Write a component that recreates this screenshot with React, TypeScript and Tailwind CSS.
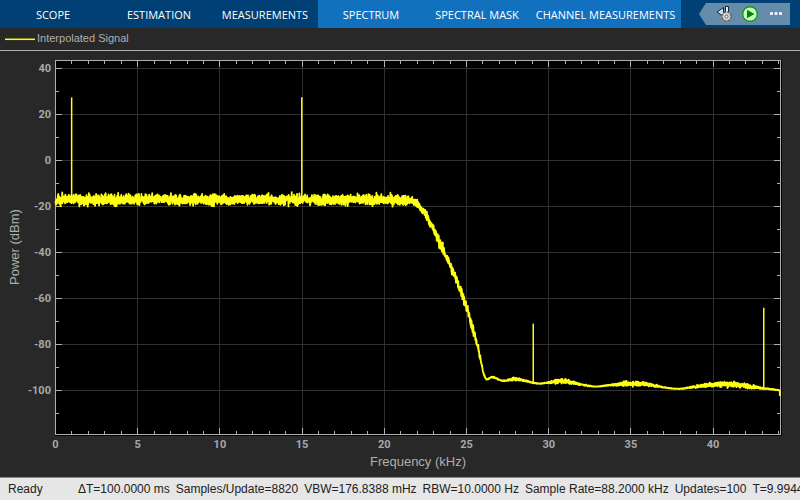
import React, { useState } from "react";

type Tab = { label: string; contextual?: boolean; wide?: boolean };

const tabs: Tab[] = [
  { label: "SCOPE" },
  { label: "ESTIMATION" },
  { label: "MEASUREMENTS" },
  { label: "SPECTRUM", contextual: true },
  { label: "SPECTRAL MASK", contextual: true },
  { label: "CHANNEL MEASUREMENTS", contextual: true, wide: true },
];

const stats = [
  "ΔT=100.0000 ms",
  "Samples/Update=8820",
  "VBW=176.8388 mHz",
  "RBW=10.0000 Hz",
  "Sample Rate=88.2000 kHz",
  "Updates=100",
  "T=9.9944",
];

// plot area inside the svg
const LEFT = 55;
const RIGHT = 780;
const TOP = 9;
const BOTTOM = 383;

const toX = (khz: number) => LEFT + 0.5 + khz * 16.44;
const toY = (dbm: number) => 109.5 - dbm * 2.304;
const snap = (v: number) => Math.floor(v) + 0.5;

// [kHz, dBm, noise]
const knots: [number, number, number][] = [
  [0, -17, 0.95],
  [20.95, -17.1, 0.9],
  [21.75, -17.7, 0.8],
  [22.17, -20.3, 0.75],
  [22.6, -24.2, 0.8],
  [23.08, -31.4, 0.9],
  [23.57, -38.7, 0.9],
  [24, -45.3, 0.9],
  [24.48, -53.5, 0.9],
  [24.79, -59.2, 0.9],
  [25.09, -65.6, 0.9],
  [25.4, -73.5, 0.9],
  [25.7, -81.5, 0.8],
  [25.88, -87, 0.5],
  [26, -91.5, 0.2],
  [26.19, -94.8, 0.1],
  [26.55, -94, 0.12],
  [27.22, -95.6, 0.1],
  [27.95, -94.8, 0.3],
  [28.56, -95.6, 0.15],
  [29.35, -96.8, 0.05],
  [30.08, -96.3, 0.15],
  [30.8, -95.7, 0.45],
  [31.9, -97.1, 0.15],
  [32.8, -98.1, 0.03],
  [33.7, -97.5, 0.1],
  [34.95, -96.8, 0.45],
  [35.9, -97, 0.4],
  [36.95, -98.4, 0.1],
  [37.87, -99.1, 0.03],
  [38.8, -98.3, 0.15],
  [39.8, -97.3, 0.45],
  [41, -97.1, 0.5],
  [42, -97.8, 0.4],
  [43, -98.8, 0.15],
  [44.05, -99.7, 0.03],
];

const peaks = [
  { khz: 1, dbm: 27.4, floor: -17 },
  { khz: 15, dbm: 27.4, floor: -17 },
  { khz: 29.08, dbm: -70.8, floor: -96.8 },
  { khz: 43.1, dbm: -63.9, floor: -99 },
];

const buildTrace = () => {
  let seed = 20117;
  const random = () => {
    seed = (seed * 1103515245 + 12345) % 2147483648;
    return seed / 2147483648;
  };
  const slope = (i: number) => {
    const a = knots[Math.max(0, i - 1)];
    const b = knots[Math.min(knots.length - 1, i + 1)];
    return (b[1] - a[1]) / (b[0] - a[0]);
  };

  const points: string[] = [];
  let k = 0;
  for (let f = 0; f <= 44.05; f += 0.01) {
    while (k < knots.length - 2 && f > knots[k + 1][0]) k++;
    const [f0, p0, n0] = knots[k];
    const [f1, p1, n1] = knots[k + 1];
    const w = f1 - f0;
    const t = (f - f0) / w;
    const level =
      p0 * (2 * t ** 3 - 3 * t ** 2 + 1) +
      slope(k) * w * (t ** 3 - 2 * t ** 2 + t) +
      p1 * (3 * t ** 2 - 2 * t ** 3) +
      slope(k + 1) * w * (t ** 3 - t ** 2);
    const noise = (random() + random() + random() + random() - 2) * 2.1 * (n0 + (n1 - n0) * t);
    points.push(`${toX(f).toFixed(2)},${toY(level + noise).toFixed(2)}`);
  }
  points.push(`${RIGHT},${toY(-102.2).toFixed(2)}`);
  return points.join(" ");
};

const trace = buildTrace();

const majorX = [0, 5, 10, 15, 20, 25, 30, 35, 40];
const majorY = [40, 20, 0, -20, -40, -60, -80, -100];
const minorX = Array.from({ length: 45 }, (_, i) => i).filter((v) => v % 5 !== 0);
const minorY = [30, 10, -10, -30, -50, -70, -90, -110];

const SpectrumPlot = () => (
  <svg
    viewBox="0 0 800 426"
    className="block h-auto w-full"
    role="img"
    aria-label="Power spectrum of the interpolated signal"
  >
    <rect x={LEFT} y={TOP} width={RIGHT - LEFT + 2} height={BOTTOM - TOP + 2} fill="#000" />

    <g stroke="#303030" shapeRendering="crispEdges">
      {majorX.slice(1).map((v) => (
        <line key={v} x1={snap(toX(v))} x2={snap(toX(v))} y1={TOP} y2={BOTTOM} />
      ))}
      {majorY.map((v) => (
        <line key={v} x1={LEFT} x2={RIGHT} y1={snap(toY(v))} y2={snap(toY(v))} />
      ))}
    </g>

    <g stroke="#afafaf" fill="none" shapeRendering="crispEdges">
      <rect x={LEFT + 0.5} y={TOP + 0.5} width={RIGHT - LEFT} height={BOTTOM - TOP} />
      {majorX.slice(1).map((v) => (
        <path key={v} d={`M${snap(toX(v))} ${TOP}v7M${snap(toX(v))} ${BOTTOM}v-6`} />
      ))}
      {minorX.map((v) => (
        <path key={v} d={`M${snap(toX(v))} ${TOP}v4M${snap(toX(v))} ${BOTTOM}v-3`} />
      ))}
      {majorY.map((v) => (
        <path key={v} d={`M${LEFT} ${snap(toY(v))}h7M${RIGHT} ${snap(toY(v))}h-6`} />
      ))}
      {minorY.map((v) => (
        <path key={v} d={`M${LEFT} ${snap(toY(v))}h4M${RIGHT} ${snap(toY(v))}h-3`} />
      ))}
    </g>

    <polyline points={trace} fill="none" stroke="#ffff11" strokeWidth="1.8" strokeLinejoin="round" />
    {peaks.map((p) => (
      <line
        key={p.khz}
        x1={toX(p.khz) - 0.3}
        x2={toX(p.khz) - 0.3}
        y1={toY(p.dbm)}
        y2={toY(p.floor)}
        stroke="#ffff11"
        strokeWidth="1.5"
      />
    ))}

    <g fill="#a8a8a8" className="font-[Roboto,Arial,sans-serif] text-[11px] font-bold">
      {majorX.map((v) => (
        <text key={v} x={toX(v)} y="397" textAnchor="middle">
          {v}
        </text>
      ))}
      {majorY.map((v) => (
        <text key={v} x="51" y={Math.floor(toY(v)) + 4} textAnchor="end">
          {v}
        </text>
      ))}
    </g>
    <g fill="#afafaf" className="font-['Liberation_Sans',Arial,sans-serif] text-[13px]">
      <text x="418" y="415" textAnchor="middle">
        Frequency (kHz)
      </text>
      <text transform="translate(19 196) rotate(-90)" textAnchor="middle">
        Power (dBm)
      </text>
    </g>
  </svg>
);

const StepIcon = () => (
  <svg width="16" height="18" viewBox="0 0 16 18" aria-hidden="true">
    <path d="M7.5 2.5v9L1 7z" fill="#b9e1fa" stroke="#222" />
    <path d="M9.5 1.5h3v7h-3z" fill="#d9effc" stroke="#222" />
    <circle cx="10.5" cy="11.5" r="4.6" fill="#d8d8d8" stroke="#555" strokeWidth="1.4" strokeDasharray="2.2 1.4" />
    <circle cx="10.5" cy="11.5" r="3.9" fill="#dedede" stroke="#777" strokeWidth="0.6" />
    <circle cx="10.5" cy="11.5" r="1.5" fill="#fff" stroke="#555" />
  </svg>
);

const RunIcon = () => (
  <svg width="16" height="16" viewBox="0 0 16 16" aria-hidden="true">
    <circle cx="8" cy="8" r="7.3" fill="#caffb8" stroke="#129a22" strokeWidth="1.4" />
    <path d="M5 3.8v8.4L12.5 8z" fill="#087f16" />
  </svg>
);

const MoreIcon = () => (
  <svg width="14" height="4" viewBox="0 0 14 4" aria-hidden="true" fill="#f2f6fa">
    <rect x="0" y="0" width="3" height="3" rx="1" />
    <rect x="4.5" y="0" width="3" height="3" rx="1" />
    <rect x="9" y="0" width="3" height="3" rx="1" />
  </svg>
);

export default function App() {
  const [active, setActive] = useState("");

  return (
    <div className="flex min-h-screen flex-col bg-[#282828] font-['Liberation_Sans',Arial,sans-serif]">
      <header className="flex h-7 items-center justify-between bg-[#004074]">
        <nav className="flex h-full">
          {tabs.map((tab) => (
            <button
              key={tab.label}
              type="button"
              aria-pressed={active === tab.label}
              onClick={() => setActive(tab.label)}
              className={`h-full pt-0.5 text-center font-['Open_Sans','Noto_Sans',sans-serif] text-[11px] whitespace-nowrap text-white ${
                tab.wide ? "w-[151px]" : "w-[106px]"
              } ${tab.contextual ? "bg-[#1171be]" : "bg-[#004074]"}`}
            >
              {tab.label}
            </button>
          ))}
        </nav>
        <div className="mr-2.5 flex h-[22px] items-center bg-[#668cac] pr-1.5 pl-[17px] [clip-path:polygon(7px_0,100%_0,100%_100%,7px_100%,0_50%)]">
          <button type="button" aria-label="Step forward settings" className="mr-2.5">
            <StepIcon />
          </button>
          <button type="button" aria-label="Run" className="mr-3">
            <RunIcon />
          </button>
          <button type="button" aria-label="More">
            <MoreIcon />
          </button>
        </div>
      </header>

      <div className="flex h-[23px] items-center gap-0.5 border-b border-[#afafaf] pl-[5px] text-[11px] text-[#afafaf]">
        <svg width="30" height="4" viewBox="0 0 30 4" aria-hidden="true">
          <path d="M0 2.3h30" stroke="#ffff11" strokeWidth="1.5" />
        </svg>
        <span className="pb-0.5">Interpolated Signal</span>
      </div>

      <main className="flex-1">
        <SpectrumPlot />
      </main>

      <footer className="flex h-[23px] items-center overflow-hidden border-t border-[#8a8486] bg-[#e6e6e6] pl-2 text-xs whitespace-nowrap text-[#212121]">
        <span className="w-[70px] shrink-0">Ready</span>
        <div className="flex shrink-0 gap-1.5">
          {stats.map((s) => (
            <span key={s}>{s}</span>
          ))}
        </div>
      </footer>
    </div>
  );
}
